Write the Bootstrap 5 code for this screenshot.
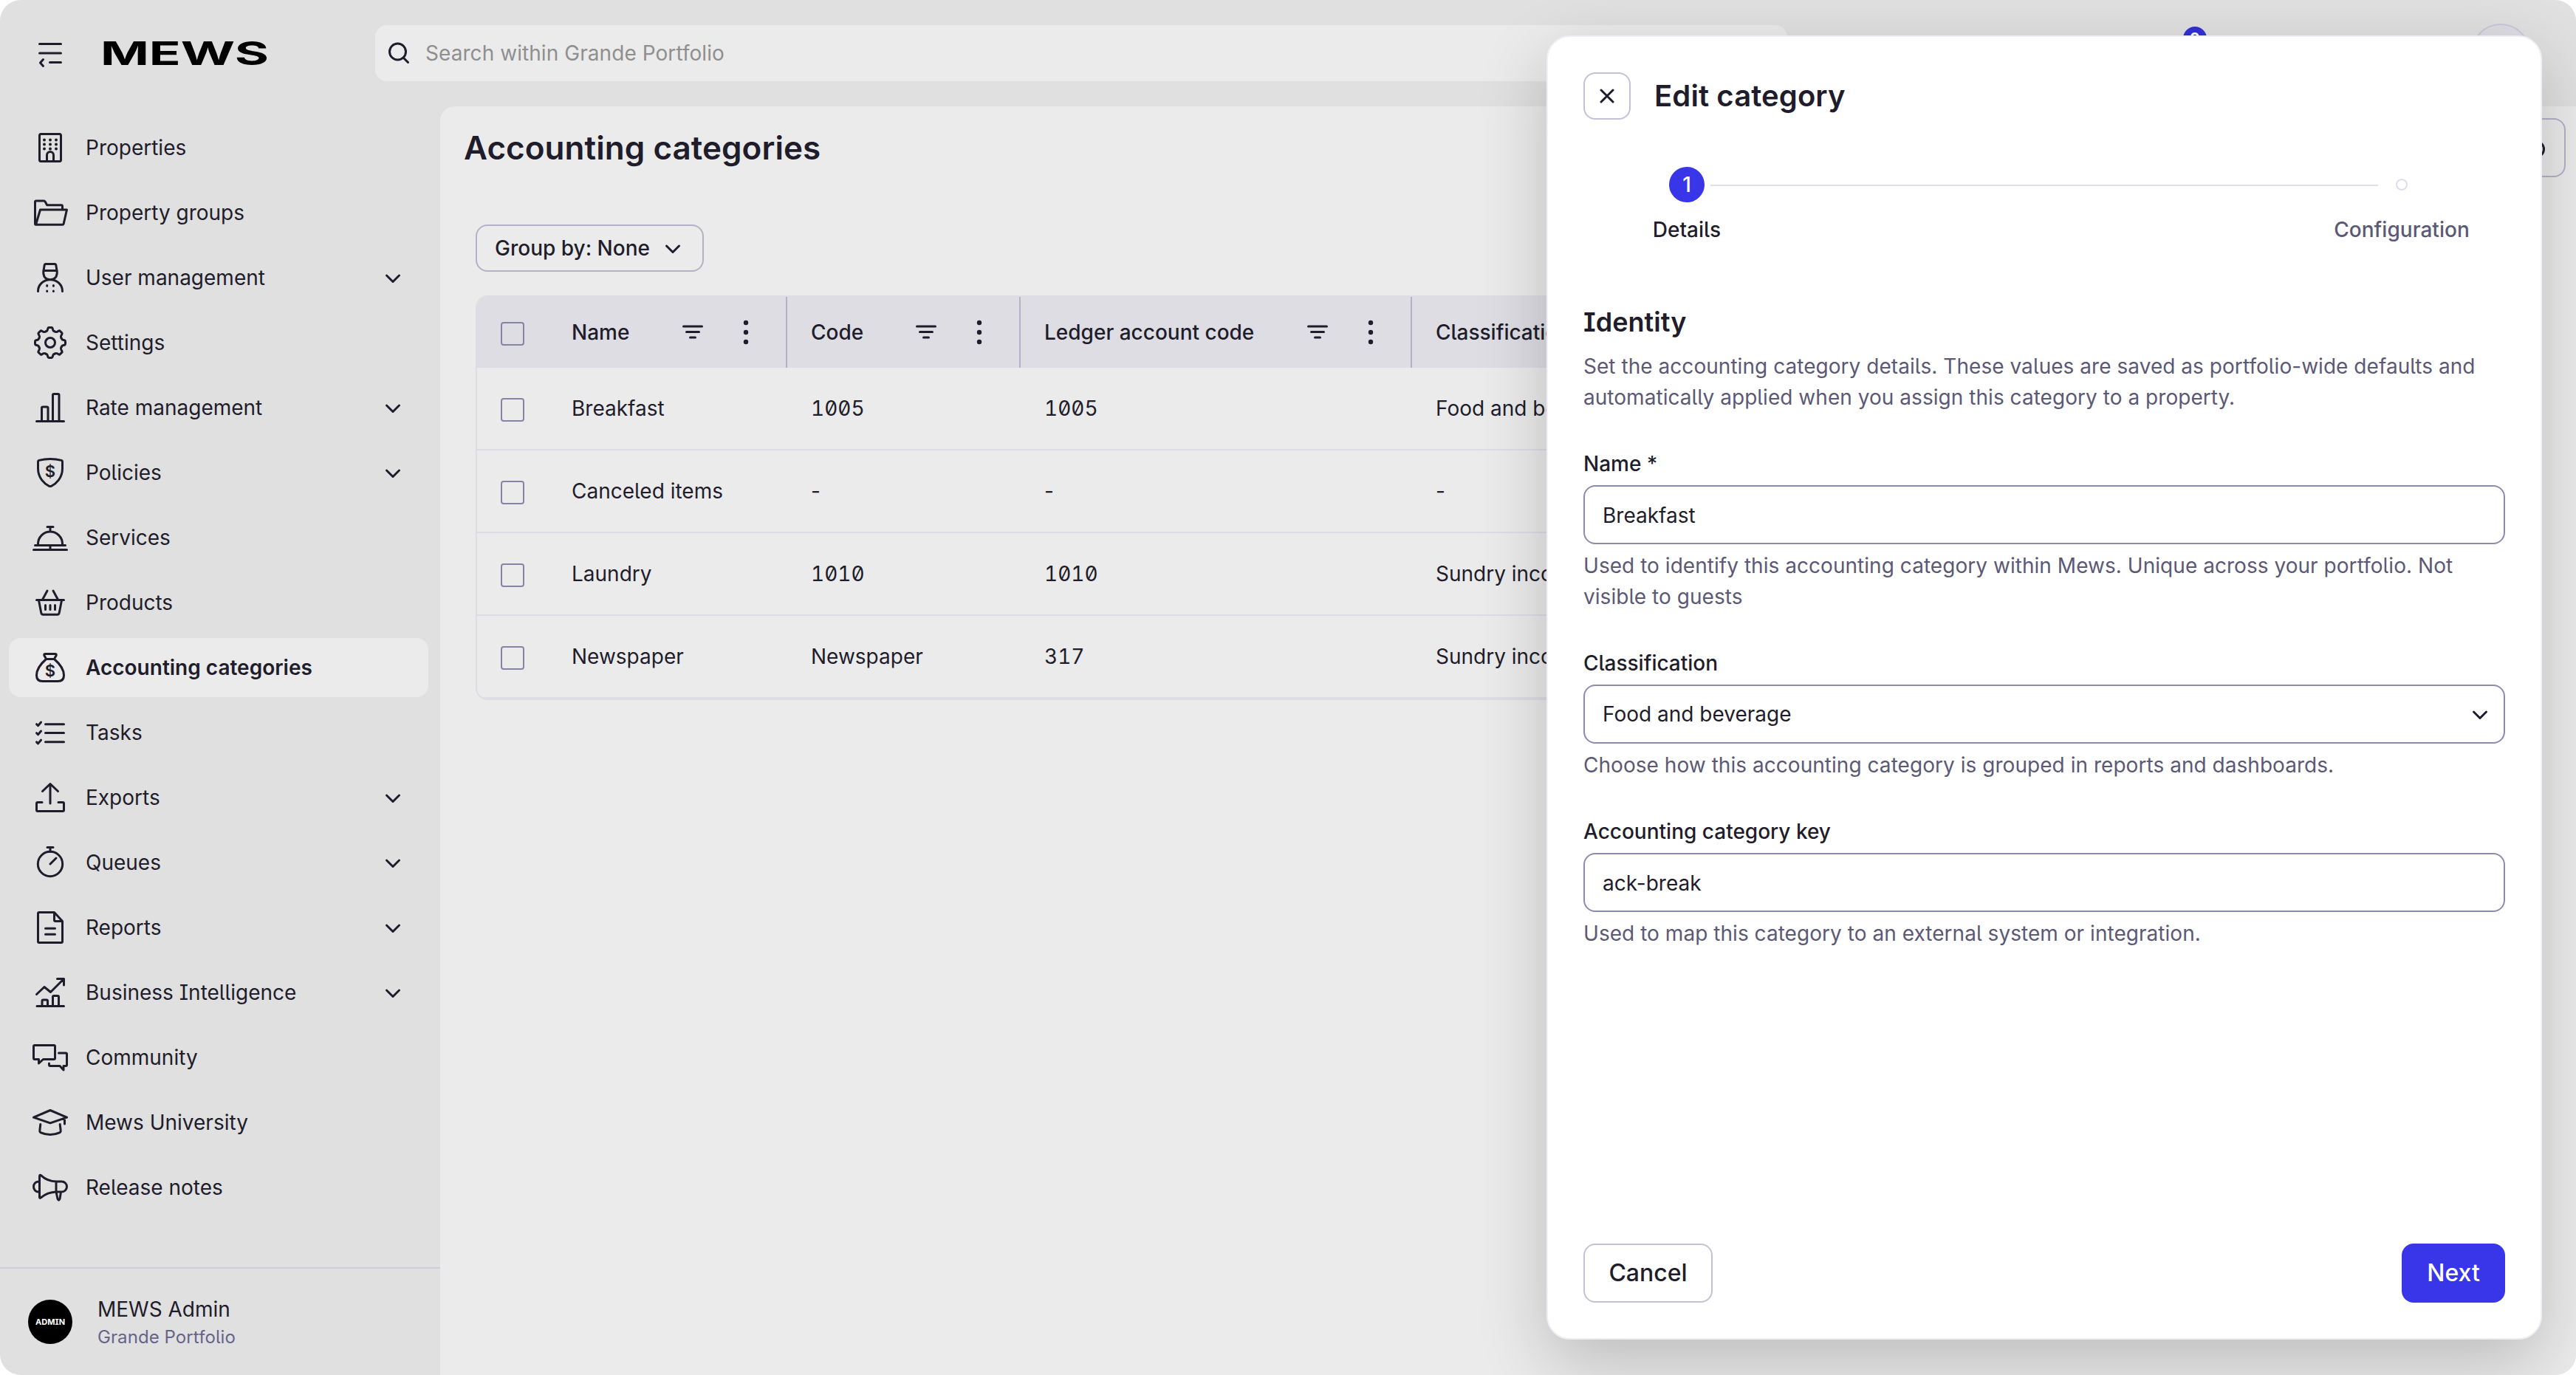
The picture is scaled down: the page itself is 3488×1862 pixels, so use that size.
<!DOCTYPE html>
<html lang="en">
<head>
    <meta charset="UTF-8">
    <meta name="viewport" content="width=device-width, initial-scale=1.0">
    <title>Accounting categories</title>
    <link href="https://cdn.jsdelivr.net/npm/bootstrap@5.3.0/dist/css/bootstrap.min.css" rel="stylesheet">
    <style>
        :root {
            --ink: #1f1d2b;
            --muted: #5b5976;
            --line: #dedde4;
            --accent: #3935e8;
        }
        body {
            background-color: #fff;
            color: var(--ink);
            font-family: Inter, sans-serif;
            font-size: 28px;
            line-height: 42px;
            font-feature-settings: "cv05", "cv08";
        }
        .app {
            height: 1862px;
            background-color: #e0e0e0;
            border-radius: 28px;
        }
        .ico {
            flex: none;
            fill: none;
            stroke: var(--ink);
            stroke-width: 3;
            stroke-linecap: round;
            stroke-linejoin: round;
        }
        .ico text {
            fill: var(--ink);
            stroke: none;
            font-size: 22px;
            font-weight: 600;
            text-anchor: middle;
        }

        /* top bar */
        .topbar {
            height: 144px;
            padding: 0 62px 0 44px;
        }
        .logo {
            margin-left: 44px;
        }
        .logo text {
            font-size: 44px;
            font-weight: 700;
        }
        .search {
            width: 1912px;
            height: 76px;
            margin-left: 140px;
            padding: 0 16px;
            border-radius: 16px;
            background-color: #ebebeb;
        }
        .search input {
            width: 1200px;
            margin-left: 20px;
            border: 0;
            padding: 0;
            letter-spacing: .06px;
            background: transparent;
        }
        .search input::placeholder {
            color: #8f8f8f;
        }
        .bell {
            width: 72px;
            height: 72px;
            margin-right: 358px;
        }
        .bell-count {
            width: 32px;
            height: 32px;
            line-height: 32px;
            font-size: 20px;
            background-color: #3430d6;
        }
        .user-pic {
            width: 80px;
            height: 80px;
            background-color: #dddce3;
            border: 2px solid #cac8da;
        }

        /* sidebar */
        .sidebar {
            width: 596px;
        }
        .menu {
            gap: 8px;
            padding: 16px 16px 0 12px;
        }
        .menu .nav-link {
            height: 80px;
            padding: 0 36px 0 32px;
            gap: 24px;
            border-radius: 16px;
            color: var(--ink);
        }
        .menu .nav-link.active {
            background-color: #ebebeb;
            font-weight: 600;
        }
        .chev {
            margin-top: 2px;
        }
        .account {
            height: 146px;
            padding-left: 38px;
            gap: 34px;
            border-top: 2px solid #cfcddc;
        }
        .account-pic {
            width: 60px;
            height: 60px;
            font-size: 11px;
        }
        .account-sub {
            font-size: 24px;
            line-height: 34px;
            letter-spacing: .08px;
            color: #66648a;
        }

        /* main area */
        .content {
            background-color: #ebebeb;
            border-top-left-radius: 20px;
            padding: 16px 14px 0 32px;
        }
        .page-title {
            font-size: 44px;
            font-weight: 600;
            line-height: 80px;
            letter-spacing: .05px;
        }
        .outline-btn {
            border: 2px solid #b4b2c8;
            border-radius: 16px;
            background: transparent;
            color: var(--ink);
            font-weight: 500;
        }
        .tool-btn {
            width: 80px;
            height: 80px;
            padding: 0;
        }
        .group-btn {
            height: 64px;
            width: 309px;
            margin: 64px 0 32px 16px;
            padding: 0 28px 0 24px;
            font-size: 28px;
        }
        .grid-wrap {
            margin-left: 16px;
            width: 2780px;
            border: 2px solid var(--line);
            border-radius: 16px;
        }
        .grid {
            table-layout: fixed;
            width: 100%;
            border-collapse: separate;
            border-spacing: 0;
        }
        .grid th {
            height: 96px;
            padding: 0 50px 0 32px;
            font-weight: 500;
            background-color: var(--line);
            border-right: 2px solid #b4b2c8;
        }
        .grid td {
            height: 112px;
            padding: 0 32px;
            border-bottom: 2px solid var(--line);
        }
        .grid .num {
            font-feature-settings: "cv05", "cv08", "tnum", "zero";
        }
        .tick {
            flex: none;
            width: 32px;
            height: 32px;
            margin: 4px 64px 0 0;
            border: 2px solid #8684a3;
            border-radius: 4px;
        }
        .head-icons {
            gap: 54px;
        }

        /* edit dialog */
        .panel {
            top: 48px;
            left: 2094px;
            width: 1348px;
            height: 1766px;
            padding: 48px;
            background-color: #fff;
            border: 2px solid #f0eff5;
            border-radius: 32px;
            box-shadow: 0 32px 96px rgba(0, 0, 0, .2);
        }
        .close-btn {
            width: 64px;
            height: 64px;
            padding: 0;
            border-color: #c4c1d6;
        }
        .panel-title {
            font-size: 40px;
            font-weight: 600;
            line-height: 64px;
            letter-spacing: .1px;
        }
        .steps {
            margin-top: 64px;
            font-weight: 500;
        }
        .step {
            width: 280px;
        }
        .step-mark {
            height: 48px;
        }
        .step-num {
            width: 48px;
            height: 48px;
            background-color: var(--accent);
        }
        .step-dot {
            width: 16px;
            height: 16px;
            border: 2px solid #dfdeea;
        }
        .step-line {
            flex: none;
            width: 904px;
            height: 2px;
            margin: 24px -108px 0;
            background-color: #dfdeea;
        }
        .section-title {
            margin: 77px 0 12px;
            font-size: 36px;
            font-weight: 600;
            line-height: 54px;
        }
        .hint {
            color: var(--muted);
            letter-spacing: .04px;
        }
        .field {
            margin-top: 48px;
        }
        .field label {
            font-weight: 500;
        }
        .field .box {
            height: 80px;
            margin: 8px 0;
            padding: 0 20px 0 24px;
            border: 2px solid #8c8aae;
            border-radius: 16px;
            font-size: 28px;
            color: var(--ink);
        }
        .field input.box {
            padding-top: 1px;
        }
        .panel-btn {
            height: 80px;
            border-radius: 16px;
            font-size: 32px;
            font-weight: 500;
            padding: 0;
        }
        .cancel-btn {
            width: 175px;
            border-color: #c4c1d6;
        }
        .next-btn {
            width: 140px;
            border: 0;
            background-color: var(--accent);
        }
    </style>
</head>
<body>
    <svg class="d-none">
        <symbol id="chevron" viewBox="0 0 24 24"><path d="M3.500 8l8.500 8.500 8.500-8.500"/></symbol>
        <symbol id="tooth" viewBox="-24 -24 48 48"><path d="M-6.200-15C-4.800-15.500-4-15.900-3.700-17.200L-3.200-19.200Q-2.900-20.500-1.600-20.500H1.600Q2.900-20.500 3.200-19.200L3.700-17.200C4-15.900 4.800-15.500 6.200-15"/></symbol>
        <symbol id="filter" viewBox="0 0 28 20"><path d="M1.500 2h25M5.500 9.500h17M10.500 17h7"/></symbol>
        <symbol id="dots" viewBox="0 0 8 36"><g fill="#1f1d2b" stroke="none"><circle cx="4" cy="5" r="3.200"/><circle cx="4" cy="18" r="3.200"/><circle cx="4" cy="31" r="3.200"/></g></symbol>
    </svg>

    <div class="app d-flex flex-column position-relative overflow-hidden">
        <header class="topbar d-flex align-items-center">
            <svg class="ico" width="48" height="48"><path d="M9.500 11.500h29M9.500 24h29M23.500 36.500h15M14.500 32.500l-4 4.500 4 4.500"/></svg>
            <svg class="logo overflow-visible" width="232" height="56"><text x="0" y="44" textLength="228" lengthAdjust="spacingAndGlyphs">MEWS</text></svg>
            <div class="search d-flex align-items-center">
                <svg class="ico" width="32" height="32"><circle cx="14.500" cy="14" r="11"/><path d="M22.500 22.500l6 6"/></svg>
                <input type="text" placeholder="Search within Grande Portfolio">
            </div>
            <div class="bell position-relative ms-auto">
                <span class="bell-count position-absolute top-0 end-0 rounded-circle text-white text-center fw-bold">9</span>
            </div>
            <div class="user-pic rounded-circle"></div>
        </header>

        <div class="d-flex flex-grow-1">
            <aside class="sidebar d-flex flex-column flex-shrink-0">
                <nav class="menu nav flex-column">
                    <a class="nav-link d-flex align-items-center" href="#">
                        <svg class="ico" width="48" height="48"><rect x="9.500" y="5.500" width="29" height="37" rx="2"/><path d="M19.500 42.500V34a4.500 4.500 0 0 1 9 0v8.500"/><path stroke-width="4" d="M16 13.500h0M24 13.500h0M32 13.500h0M16 19.500h0M24 19.500h0M32 19.500h0M16 25.500h0M24 25.500h0M32 25.500h0"/></svg>
                        Properties
                    </a>
                    <a class="nav-link d-flex align-items-center" href="#">
                        <svg class="ico" width="48" height="48"><path d="M4.500 40.200q-1 0-1-1.500V9.500Q3.500 8 5 8h10.500q1 0 1.600 1l2.600 4.700H39q1.500 0 1.500 1.500V20M10.500 20h36l-4.300 18.800q-.3 1.400-1.700 1.400h-36z"/></svg>
                        Property groups
                    </a>
                    <a class="nav-link d-flex align-items-center" href="#">
                        <svg class="ico" width="48" height="48"><path d="M15 14.500l1.200-7.500q.3-1.500 1.800-1.500h12q1.500 0 1.800 1.500l1.200 7.500zM14.800 14.500q-.8 12 9.200 12.200 10-.2 9.200-12.200M7.500 42.500C7.500 33 15 26.700 24 26.700S40.500 33 40.500 42.500M19.700 34.500v.8M28.400 34.500v.8M19.700 42v.5M28.400 42v.5"/></svg>
                        User management
                        <svg class="ico chev ms-auto" width="24" height="24"><use href="#chevron"/></svg>
                    </a>
                    <a class="nav-link d-flex align-items-center" href="#">
                        <svg class="ico overflow-visible" width="48" height="48" viewBox="-24 -24 48 48">
                            <circle r="6.500"/>
                            <g id="half-gear">
                                <use href="#tooth" x="-24" y="-24" width="48" height="48"/>
                                <use href="#tooth" x="-24" y="-24" width="48" height="48" transform="rotate(45)"/>
                                <use href="#tooth" x="-24" y="-24" width="48" height="48" transform="rotate(90)"/>
                                <use href="#tooth" x="-24" y="-24" width="48" height="48" transform="rotate(135)"/>
                            </g>
                            <use href="#half-gear" transform="rotate(180)"/>
                        </svg>
                        Settings
                    </a>
                    <a class="nav-link d-flex align-items-center" href="#">
                        <svg class="ico" width="48" height="48"><path d="M5.500 42.500h37M12.500 42V24.500q0-1.500 1.500-1.500h5.500q1.500 0 1.500 1.500V42M27.500 42V7q0-1.500 1.500-1.500h5.500Q36 5.500 36 7v35"/></svg>
                        Rate management
                        <svg class="ico chev ms-auto" width="24" height="24"><use href="#chevron"/></svg>
                    </a>
                    <a class="nav-link d-flex align-items-center" href="#">
                        <svg class="ico" width="48" height="48"><path d="M7.500 9q0-1.300 1.300-1.600 15.200-3.800 30.400 0 1.300.3 1.300 1.600v9.500c0 13-9 21-14.700 23.700q-1.800.8-3.600 0C16.500 39.500 7.500 31.500 7.500 18.500z"/><text x="24" y="30">$</text></svg>
                        Policies
                        <svg class="ico chev ms-auto" width="24" height="24"><use href="#chevron"/></svg>
                    </a>
                    <a class="nav-link d-flex align-items-center" href="#">
                        <svg class="ico" width="48" height="48"><path d="M20 9.500h8M24 10v6M7.500 34v-1.500a16.500 16.500 0 0 1 33 0V34M3.500 34.500h41M24 35v5M1.500 40.500h45"/></svg>
                        Services
                    </a>
                    <a class="nav-link d-flex align-items-center" href="#">
                        <svg class="ico" width="48" height="48"><path d="M20 8l-6.500 12M28 8l6.500 12M5.500 20.500h37M8.500 21l3.300 17q.4 2.200 2.600 2.200h19.200q2.200 0 2.600-2.200l3.300-17M17.500 27.500v6M24 27.500v6M30.500 27.500v6"/></svg>
                        Products
                    </a>
                    <a class="nav-link active d-flex align-items-center" href="#">
                        <svg class="ico" width="48" height="48"><path d="M18.500 12.500q-.8-2.300-2.500-4.500-1-2.500 1.500-2.500h13q2.500 0 1.500 2.500-1.700 2.200-2.500 4.500zM18.500 12.500C11 19 5.500 27 5.500 34.500q0 8 8 8h21q8 0 8-8C42.500 27 37 19 29.500 12.500"/><text x="24" y="36">$</text></svg>
                        Accounting categories
                    </a>
                    <a class="nav-link d-flex align-items-center" href="#">
                        <svg class="ico" width="48" height="48"><path d="M17.500 12.700h25M17.500 24.500h25M17.500 36.700h25M5.500 12.700l2 2 4-4.700M5.500 24.700l2 2 4-4.700M5.500 36.900l2 2 4-4.700"/></svg>
                        Tasks
                    </a>
                    <a class="nav-link d-flex align-items-center" href="#">
                        <svg class="ico" width="48" height="48"><path d="M24 32V5.500M13.500 15.500L24 5.500l10.500 10M13 30.500H7q-1.500 0-1.500 1.500v9q0 1.500 1.500 1.500h34q1.500 0 1.500-1.500v-9q0-1.500-1.500-1.500h-6"/></svg>
                        Exports
                        <svg class="ico chev ms-auto" width="24" height="24"><use href="#chevron"/></svg>
                    </a>
                    <a class="nav-link d-flex align-items-center" href="#">
                        <svg class="ico" width="48" height="48"><circle cx="24" cy="26" r="16.700"/><path d="M20 3.500h8M24 4v5M24 26l8-8"/></svg>
                        Queues
                        <svg class="ico chev ms-auto" width="24" height="24"><use href="#chevron"/></svg>
                    </a>
                    <a class="nav-link d-flex align-items-center" href="#">
                        <svg class="ico" width="48" height="48"><path d="M29.500 3.500H9Q7.500 3.500 7.500 5v38q0 1.500 1.500 1.500h30q1.500 0 1.500-1.500V15.500zM29.500 3.500V14q0 1.500 1.500 1.500h9.500M17.500 25.300h13M17.500 33.300h13"/></svg>
                        Reports
                        <svg class="ico chev ms-auto" width="24" height="24"><use href="#chevron"/></svg>
                    </a>
                    <a class="nav-link d-flex align-items-center" href="#">
                        <svg class="ico" width="48" height="48"><path d="M5.500 26.500L16 16.500l8.500 7L42.500 5.500M33.500 5.500h9V14M6 42.500h36.500M13 42v-6.500q0-1.500 1.500-1.500H19q1.500 0 1.500 1.500V42M27.500 42V30q0-1.500 1.500-1.500h5q1.500 0 1.500 1.500v12"/></svg>
                        Business Intelligence
                        <svg class="ico chev ms-auto" width="24" height="24"><use href="#chevron"/></svg>
                    </a>
                    <a class="nav-link d-flex align-items-center" href="#">
                        <svg class="ico" width="48" height="48"><path d="M3 7.500h26q1.500 0 1.500 1.500v16q0 1.500-1.500 1.500H14.500L8.500 32v-5.500H3q-1.500 0-1.500-1.500V9q0-1.500 1.500-1.500zM35.500 18H45q1.500 0 1.500 1.500V34q0 1.500-1.500 1.500h-3V41l-5-5.500H24q-1.500 0-1.500-1.500v-2"/></svg>
                        Community
                    </a>
                    <a class="nav-link d-flex align-items-center" href="#">
                        <svg class="ico" width="48" height="48"><path d="M24 7.500l22.500 9.700L24 24.800 1.500 17.200zM43.500 18.500V26M10.800 26.500l-1 8.500q-.3 2 1.700 2.900Q17 40.500 24 40.500t12.500-2.600q2-.9 1.700-2.900l-1-8.500"/></svg>
                        Mews University
                    </a>
                    <a class="nav-link d-flex align-items-center" href="#">
                        <svg class="ico" width="48" height="48"><path d="M9.500 9q0-2.800 2.200-1.200Q20 15.500 32 16h7.500a7 7 0 0 1 0 14H32Q20 30.500 11.700 37.700 9.500 39.500 9.500 37zM9 16H8a6.500 7 0 0 0 0 14h1M32 16v14l2 9.500q1.500 3.500 3 0l1.500-9.500"/></svg>
                        Release notes
                    </a>
                </nav>
                <div class="account d-flex align-items-center mt-auto">
                    <div class="account-pic rounded-circle bg-black text-white fw-bold d-flex align-items-center justify-content-center">ADMIN</div>
                    <div>
                        <div>MEWS Admin</div>
                        <div class="account-sub">Grande Portfolio</div>
                    </div>
                </div>
            </aside>

            <main class="content flex-grow-1">
                <div class="d-flex justify-content-between">
                    <h1 class="page-title mb-0">Accounting categories</h1>
                    <button class="btn outline-btn tool-btn"><svg class="ico" width="48" height="48"><circle cx="24" cy="26" r="10.500"/></svg></button>
                </div>
                <button class="btn outline-btn group-btn d-flex align-items-center">
                    Group by: None
                    <svg class="ico chev ms-auto" width="24" height="24"><use href="#chevron"/></svg>
                </button>
                <div class="grid-wrap overflow-hidden">
                    <table class="grid">
                        <colgroup><col width="420"><col width="316"><col width="530"><col></colgroup>
                        <thead>
                            <tr>
                                <th><div class="d-flex align-items-center"><span class="tick"></span>Name<span class="head-icons ms-auto d-flex align-items-center"><svg class="ico" width="28" height="20"><use href="#filter"/></svg><svg class="ico" width="8" height="36"><use href="#dots"/></svg></span></div></th>
                                <th><div class="d-flex align-items-center">Code<span class="head-icons ms-auto d-flex align-items-center"><svg class="ico" width="28" height="20"><use href="#filter"/></svg><svg class="ico" width="8" height="36"><use href="#dots"/></svg></span></div></th>
                                <th><div class="d-flex align-items-center">Ledger account code<span class="head-icons ms-auto d-flex align-items-center"><svg class="ico" width="28" height="20"><use href="#filter"/></svg><svg class="ico" width="8" height="36"><use href="#dots"/></svg></span></div></th>
                                <th>Classification</th>
                            </tr>
                        </thead>
                        <tbody>
                            <tr>
                                <td><div class="d-flex align-items-center"><span class="tick"></span>Breakfast</div></td>
                                <td class="num">1005</td>
                                <td class="num">1005</td>
                                <td>Food and beverage</td>
                            </tr>
                            <tr>
                                <td><div class="d-flex align-items-center"><span class="tick"></span>Canceled items</div></td>
                                <td>-</td>
                                <td>-</td>
                                <td>-</td>
                            </tr>
                            <tr>
                                <td><div class="d-flex align-items-center"><span class="tick"></span>Laundry</div></td>
                                <td class="num">1010</td>
                                <td class="num">1010</td>
                                <td>Sundry income</td>
                            </tr>
                            <tr>
                                <td><div class="d-flex align-items-center"><span class="tick"></span>Newspaper</div></td>
                                <td>Newspaper</td>
                                <td class="num">317</td>
                                <td>Sundry income</td>
                            </tr>
                        </tbody>
                    </table>
                </div>
            </main>
        </div>

        <section class="panel position-absolute d-flex flex-column">
            <div class="d-flex align-items-center">
                <button class="btn outline-btn close-btn d-flex align-items-center justify-content-center"><svg class="ico" width="20" height="20"><path d="M2 2l16 16M18 2L2 18"/></svg></button>
                <h2 class="panel-title mb-0 ps-4 ms-2">Edit category</h2>
            </div>

            <div class="steps d-flex justify-content-between">
                <div class="step text-center">
                    <div class="step-mark d-flex align-items-center justify-content-center"><span class="step-num rounded-circle text-white d-flex align-items-center justify-content-center">1</span></div>
                    <div class="mt-3">Details</div>
                </div>
                <div class="step-line"></div>
                <div class="step text-center hint">
                    <div class="step-mark d-flex align-items-center justify-content-center"><span class="step-dot rounded-circle"></span></div>
                    <div class="mt-3">Configuration</div>
                </div>
            </div>

            <h3 class="section-title">Identity</h3>
            <div class="hint">Set the accounting category details. These values are saved as portfolio-wide defaults and automatically applied when you assign this category to a property.</div>

            <div class="field">
                <label class="d-block" for="cat-name">Name *</label>
                <input class="box form-control" id="cat-name" type="text" value="Breakfast">
                <div class="hint">Used to identify this accounting category within Mews. Unique across your portfolio. Not visible to guests</div>
            </div>
            <div class="field">
                <label class="d-block">Classification</label>
                <div class="box d-flex align-items-center">
                    Food and beverage
                    <svg class="ico chev ms-auto" width="24" height="24"><use href="#chevron"/></svg>
                </div>
                <div class="hint">Choose how this accounting category is grouped in reports and dashboards.</div>
            </div>
            <div class="field">
                <label class="d-block" for="cat-key">Accounting category key</label>
                <input class="box form-control" id="cat-key" type="text" value="ack-break">
                <div class="hint">Used to map this category to an external system or integration.</div>
            </div>

            <div class="d-flex justify-content-between mt-auto">
                <button class="btn outline-btn panel-btn cancel-btn">Cancel</button>
                <button class="btn panel-btn next-btn text-white">Next</button>
            </div>
        </section>
    </div>

    <script src="https://cdn.jsdelivr.net/npm/bootstrap@5.3.0/dist/js/bootstrap.bundle.min.js"></script>
</body>
</html>
